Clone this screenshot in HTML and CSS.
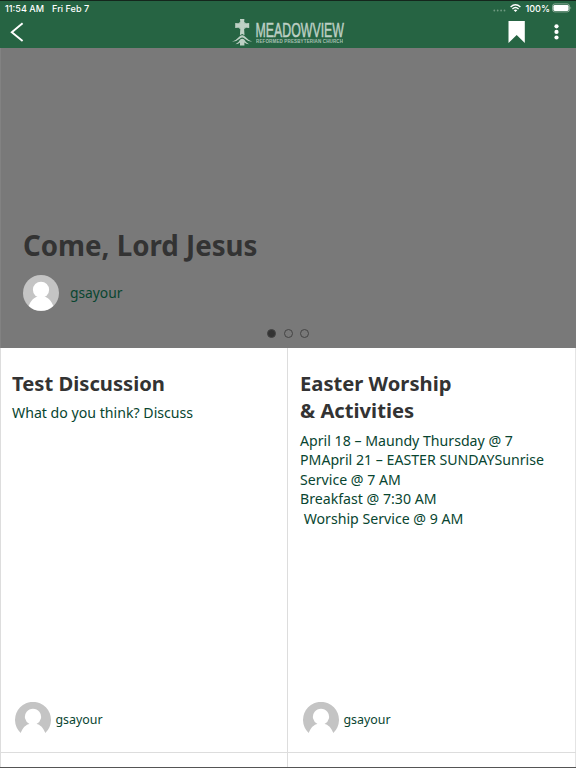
FILE: index.html
```html
<!DOCTYPE html>
<html lang="en">
<head>
    <meta charset="UTF-8">
    <meta name="viewport" content="width=device-width, initial-scale=1.0">
    <title>Meadowview</title>
    <link rel="stylesheet" href="styles.css">
</head>
<body>
    <!-- Shared avatar -->
    <svg class="defs" width="0" height="0">
        <symbol id="avatar" viewBox="0 0 36 36">
            <path d="M5.700 31A18 18 0 1 1 30.300 31C28 25.500 25 22.700 21.500 22.100A8.100 8.100 0 1 0 14.500 22.100C11 22.700 8 25.500 5.700 31z" fill="#c4c4c4"/>
        </symbol>
    </svg>

    <header class="header">
        <div class="status-bar">
            <span class="time">11:54 AM</span>
            <span class="date">Fri Feb 7</span>
            <svg class="signal" width="13" height="8" viewBox="0 0 13 8" fill="#6f9a81">
                <circle cx="1.3" cy="6.5" r=".9"/>
                <circle cx="4.7" cy="6.5" r=".9"/>
                <circle cx="8.1" cy="6.5" r=".9"/>
                <circle cx="11.5" cy="6.5" r=".9"/>
            </svg>
            <svg class="wifi" width="11" height="8" viewBox="0 0 11 8" fill="none" stroke="#fff" stroke-width="1.4">
                <path d="M.6 3Q5.500-1.400 10.400 3M2.400 4.900Q5.500 2.100 8.600 4.900"/>
                <path d="M5.500 8L3.700 6.200Q5.500 4.700 7.300 6.200z" fill="#fff" stroke="none"/>
            </svg>
            <span class="percent">100%</span>
            <svg class="battery" width="20" height="10" viewBox="0 0 20 10">
                <rect x=".5" y=".9" width="17" height="8" rx="2.300" fill="none" stroke="#a0baaa" stroke-width=".8"/>
                <rect x="1.400" y="1.900" width="15.200" height="6" rx="1.300" fill="#fff"/>
                <path d="M18.500 3.500Q20 4.900 18.500 6.300z" fill="#a0baaa"/>
            </svg>
        </div>
        <div class="nav-bar">
            <svg class="back" width="14" height="20" viewBox="0 0 14 20" fill="none" stroke="#fff" stroke-width="1.900">
                <path d="M12.600 1.300L1.800 10.200L12.600 19"/>
            </svg>
            <svg class="logo" width="114" height="28" viewBox="0 0 114 28" fill="#bdd0c4">
                <!-- Celtic cross on a hill -->
                <path d="M8 0H12.400L12 4.400L17.200 4V9L12 8.600L12.500 16.200L10.200 15L7.900 16.200L8.400 8.600L3.200 9V4L8.400 4.400z"/>
                <circle cx="10.200" cy="6.500" r="4.100" opacity=".8"/>
                <path d="M0 22.800Q4.500 21 7.500 17.500Q10.200 15 12.900 17.500Q16 21 20.400 22.800Q15.500 22.400 12.400 19.500Q10.200 17.700 8 19.500Q5 22.400 0 22.800z"/>
                <path d="M3.500 25.200Q7 23.500 8 20.800Q10.200 18.800 12.400 20.800Q13.500 23.500 17 25.200Q14 25.200 12.400 23.500V26.500H8V23.500Q6.500 25.200 3.500 25.200z"/>
                <text class="logo-name" x="23.500" y="18" textLength="88.500" lengthAdjust="spacingAndGlyphs">MEADOWVIEW</text>
                <text class="logo-sub" x="24" y="24.200" textLength="87" lengthAdjust="spacing">REFORMED PRESBYTERIAN CHURCH</text>
            </svg>
            <svg class="bookmark" width="17" height="22" viewBox="0 0 17 22" fill="#fff">
                <path d="M.500 0H16.800V22L8.700 14L.500 22z"/>
            </svg>
            <svg class="more" width="5" height="16" viewBox="0 0 5 16" fill="#fff">
                <circle cx="2.500" cy="2.300" r="2.100"/>
                <circle cx="2.500" cy="7.900" r="2.100"/>
                <circle cx="2.500" cy="13.500" r="2.100"/>
            </svg>
        </div>
    </header>

    <section class="hero">
        <h1>Come, Lord Jesus</h1>
        <div class="author">
            <svg class="avatar" viewBox="0 0 36 36">
                <circle cx="18" cy="18" r="18" fill="#c4c4c4"/>
                <circle cx="18" cy="14.800" r="8.100" fill="#fff"/>
                <path d="M5.700 31C8 25.500 11 22.300 14.500 21.700H21.500C25 22.300 28 25.500 30.300 31A18 18 0 0 1 5.700 31z" fill="#fff"/>
            </svg>
            <span>gsayour</span>
        </div>
        <div class="dots">
            <span class="dot active"></span>
            <span class="dot"></span>
            <span class="dot"></span>
        </div>
    </section>

    <main class="grid">
        <article class="card">
            <h2>Test Discussion</h2>
            <p>What do you think? Discuss</p>
            <div class="author">
                <svg class="avatar"><use href="#avatar"/></svg>
                <span>gsayour</span>
            </div>
        </article>
        <article class="card">
            <h2>Easter Worship<br>&amp; Activities</h2>
            <p>April 18 – Maundy Thursday @ 7<br>PMApril 21 – EASTER SUNDAYSunrise<br>Service @ 7 AM<br>Breakfast @ 7:30 AM<br>&nbsp;Worship Service @ 9 AM</p>
            <div class="author">
                <svg class="avatar"><use href="#avatar"/></svg>
                <span>gsayour</span>
            </div>
        </article>
        <article class="card"></article>
        <article class="card"></article>
    </main>
</body>
</html>
```

FILE: styles.css
```css
* {
    box-sizing: border-box;
}

body {
    margin: 0;
    height: 768px;
    overflow: hidden;
    display: flex;
    flex-direction: column;
    font-family: "Noto Sans", sans-serif;
    color: #084530;
    background-color: #fff;
    border-bottom: 1px solid #555;
}

h1, h2, p {
    margin: 0;
}

.defs {
    position: absolute;
}

/* Header */
.header {
    height: 48px;
    flex: none;
    background-color: #266443;
    border-top: 1px solid #14261c;
    color: #fff;
}

.status-bar {
    display: flex;
    align-items: center;
    height: 14px;
    padding: 0 4px 0 5px;
    font-family: Inter, sans-serif;
    font-size: 9.1px;
    font-weight: 500;
}

.date {
    margin-left: 8px;
}

.signal {
    margin-left: auto;
}

.wifi {
    margin-left: 4px;
}

.percent {
    margin-left: 4px;
}

.battery {
    margin-left: 2px;
}

.nav-bar {
    display: flex;
    align-items: center;
    height: 34px;
    padding: 0 17px 0 10px;
}

.logo {
    margin-left: 208px;
    margin-top: 2px;
    overflow: visible;
}

.logo-name {
    font-family: "Liberation Sans", sans-serif;
    font-size: 20px;
    stroke: #bdd0c4;
    stroke-width: 0.5px;
}

.logo-sub {
    font-family: "Liberation Sans Narrow", "Liberation Sans", sans-serif;
    font-size: 4.5px;
    font-weight: bold;
    opacity: 0.85;
}

.bookmark {
    margin-left: auto;
}

.more {
    margin-left: 29px;
}

/* Featured slide */
.hero {
    position: relative;
    flex: none;
    height: 300px;
    padding: 178px 23px 0 22px;
    background-color: #797979;
    border-left: 1px solid #828282;
}

.hero h1 {
    font-size: 27.7px;
    line-height: 38px;
    color: #333;
}

.author {
    display: flex;
    align-items: center;
}

.author span {
    margin-top: -1px;
}

.avatar {
    width: 36px;
    height: 36px;
}

.hero .author {
    margin-top: 11px;
    gap: 11px;
    font-size: 13.8px;
}

.dots {
    position: absolute;
    left: 0;
    right: 1px;
    bottom: 10.5px;
    display: flex;
    justify-content: center;
    gap: 7.5px;
}

.dot {
    width: 9px;
    height: 9px;
    border: 1px solid #444;
    border-radius: 50%;
}

.dot.active {
    background-color: #333;
}

/* Cards */
.grid {
    display: grid;
    grid-template-columns: 287px 289px;
    grid-template-rows: 405px 15px;
    border-right: 1px solid #e4e4e4;
}

.card {
    display: flex;
    flex-direction: column;
    padding: 22px 12px 14.5px 11px;
    border-left: 1px solid #ddd;
    border-bottom: 1px solid #ddd;
}

.card:nth-child(even) {
    padding-left: 12px;
}

.card:nth-child(n+3) {
    padding: 0;
    border-bottom: none;
}

.card h2 {
    font-size: 20.2px;
    line-height: 27.4px;
    color: #333;
}

.card p {
    margin-top: 6px;
    font-size: 14.15px;
    line-height: 19.5px;
    white-space: nowrap;
}

.card .author {
    margin-top: auto;
    margin-left: 3px;
    gap: 4.5px;
    font-size: 12.4px;
}
```
